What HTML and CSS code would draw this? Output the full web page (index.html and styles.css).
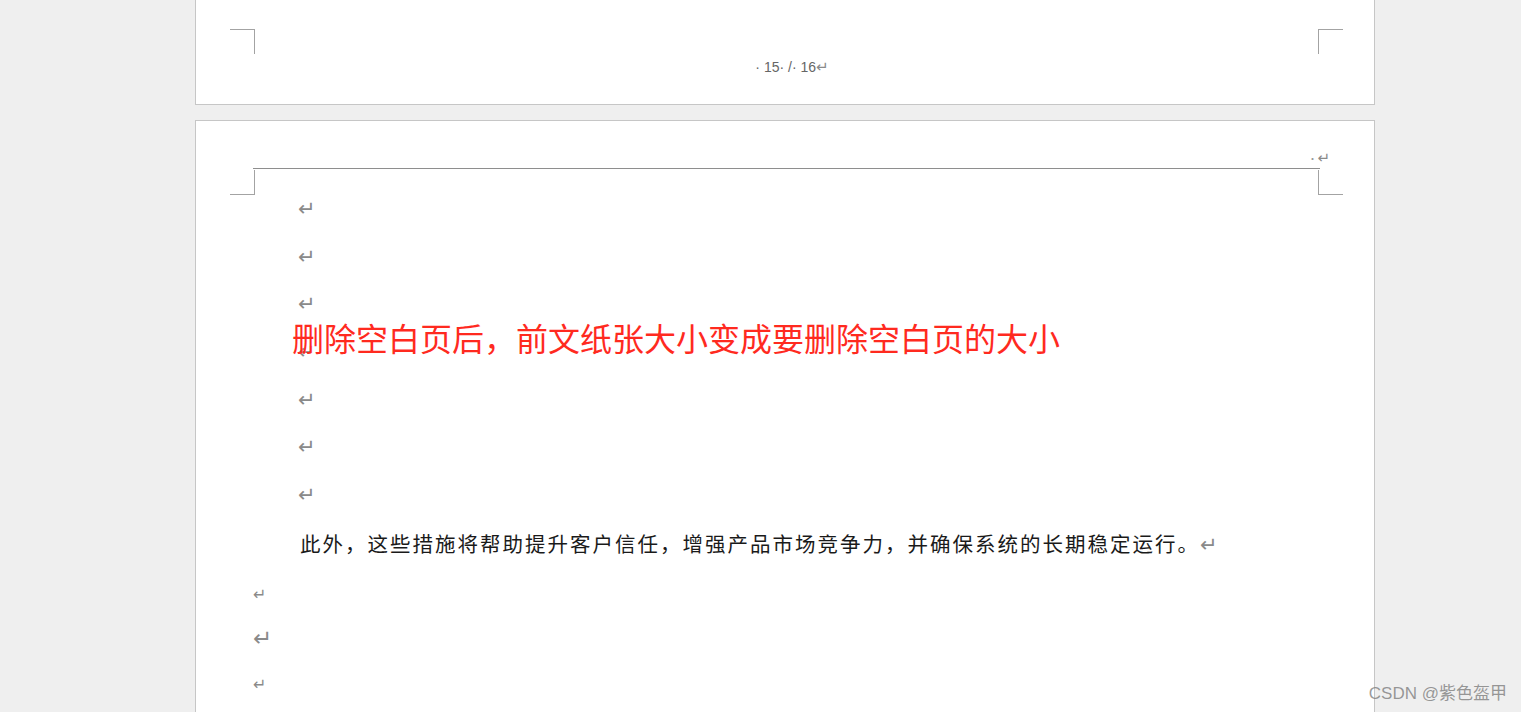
FILE: index.html
```html
<!DOCTYPE html>
<html lang="zh-CN">
<head>
  <meta charset="UTF-8">
  <title>文档</title>
  <link rel="stylesheet" href="styles.css">
</head>
<body>
  <div class="doc">
    <div class="page page-first">
      <span class="crop crop-tl"></span>
      <span class="crop crop-tr"></span>
      <div class="page-num">· 15· /· 16<span class="ret">↵</span></div>
    </div>

    <div class="page page-second">
      <span class="crop crop-bl"></span>
      <span class="crop crop-br"></span>
      <div class="header">
        <span class="header-mark">·<span class="ret">↵</span></span>
      </div>

      <div class="content">
        <p class="line"><span class="ret">↵</span></p>
        <p class="line"><span class="ret">↵</span></p>
        <p class="line"><span class="ret">↵</span></p>
        <p class="line"><span class="ret">↵</span></p>
        <p class="line"><span class="ret">↵</span></p>
        <p class="line"><span class="ret">↵</span></p>
        <p class="line"><span class="ret">↵</span></p>
        <p class="line text">此外，这些措施将帮助提升客户信任，增强产品市场竞争力，并确保系统的长期稳定运行。<span class="ret">↵</span></p>
      </div>

      <div class="tail">
        <p class="line small"><span class="ret">↵</span></p>
        <p class="line"><span class="ret big">↵</span></p>
        <p class="line small"><span class="ret">↵</span></p>
      </div>

      <div class="note">删除空白页后，前文纸张大小变成要删除空白页的大小</div>
    </div>
  </div>

  <div class="watermark">CSDN @紫色盔甲</div>
</body>
</html>
```

FILE: styles.css
```css
body {
  margin: 0;
  background: #efefef;
  font-family: "Noto Sans CJK SC", "Liberation Sans", sans-serif;
  height: 712px;
  overflow: hidden;
}

.doc {
  margin-left: 195px;
  width: 1180px;
  display: flex;
  flex-direction: column;
  gap: 15px;
}

.page {
  position: relative;
  background: #fff;
  border: 1px solid #c6c6c6;
  box-sizing: border-box;
}

.page-first {
  height: 105px;
  border-top: none;
}

.page-second {
  height: 620px;
  border-bottom: none;
  padding-left: 57px;
}

/* crop marks */
.crop {
  position: absolute;
  width: 24px;
  height: 24px;
  border: 0 solid #a3a3a3;
}

.crop-tl {
  left: 34px;
  top: 29px;
  border-top-width: 1px;
  border-right-width: 1px;
}

.crop-tr {
  left: 1122px;
  top: 29px;
  border-top-width: 1px;
  border-left-width: 1px;
}

.crop-bl {
  left: 34px;
  top: 49px;
  border-bottom-width: 1px;
  border-right-width: 1px;
}

.crop-br {
  left: 1122px;
  top: 49px;
  border-bottom-width: 1px;
  border-left-width: 1px;
}

.page-num {
  padding-top: 58px;
  padding-left: 14px;
  text-align: center;
  font-family: "Liberation Sans", sans-serif;
  font-size: 14px;
  line-height: 18px;
  color: #666;
}

.ret {
  font-family: "DejaVu Sans", sans-serif;
  color: #8a8a8a;
  font-size: 21px;
}

.page-num .ret {
  font-size: 15px;
}

.header {
  width: 1067px;
  height: 47px;
  border-bottom: 1px solid #8e8e8e;
  display: flex;
  justify-content: flex-end;
  align-items: flex-end;
}

.header-mark {
  font-size: 10px;
  color: #999;
  line-height: 16px;
  padding-bottom: 1px;
  margin-right: -10px;
}

.header-mark .ret {
  font-size: 15px;
}

.content {
  padding-top: 17px;
  padding-left: 45px;
}

.line {
  margin: 0;
  height: 47.7px;
  line-height: 47.7px;
}

.text {
  font-size: 20.5px;
  letter-spacing: 2px;
  color: #1a1a1a;
  padding-left: 2px;
}

.text .ret {
  font-size: 21px;
  letter-spacing: 0;
}

.tail {
  padding-top: 3px;
}

.tail .line {
  height: 45px;
  line-height: 45px;
}

.tail .small .ret {
  font-size: 16px;
}

.tail .ret.big {
  font-size: 23px;
}

.note {
  position: absolute;
  left: 96px;
  top: 196px;
  font-size: 32px;
  line-height: 40px;
  color: #ff2a1f;
  white-space: nowrap;
}

.watermark {
  position: absolute;
  right: 14px;
  bottom: 8px;
  font-family: "Liberation Sans", "Noto Sans CJK SC", sans-serif;
  font-size: 17px;
  color: rgba(120, 120, 120, 0.75);
}
```
